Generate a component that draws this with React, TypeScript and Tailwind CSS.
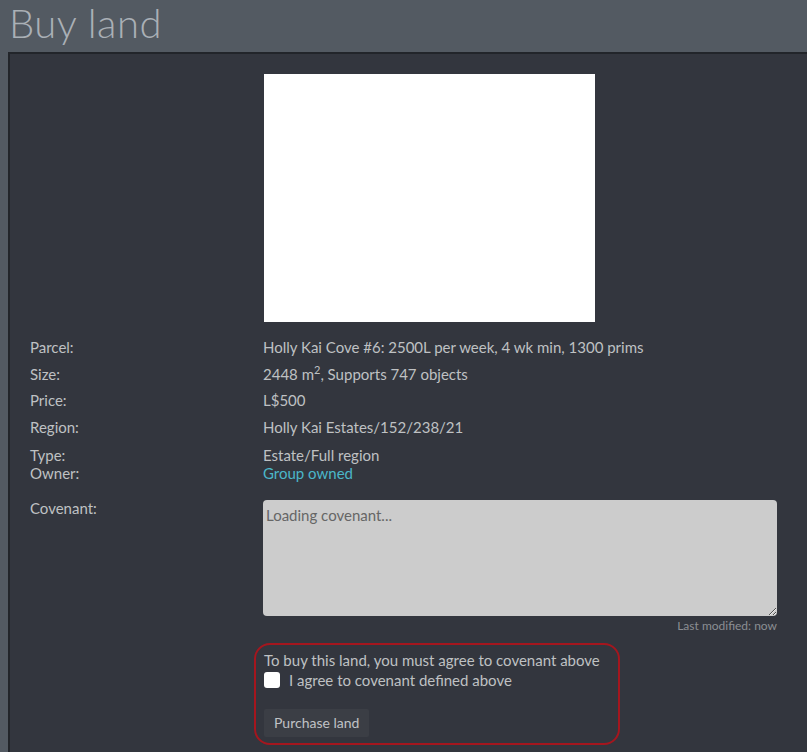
import React from "react";

const rows: [string, React.ReactNode][] = [
  ["Parcel:", "Holly Kai Cove #6: 2500L per week, 4 wk min, 1300 prims"],
  [
    "Size:",
    <>
      2448 m<sup className="text-[11px] -top-[6px]">2</sup>, Supports 747 objects
    </>,
  ],
  ["Price:", "L$500"],
  ["Region:", "Holly Kai Estates/152/238/21"],
];

export default function App() {
  return (
    <div
      className="min-h-[752px] bg-[#535a62] overflow-hidden"
      style={{ fontFamily: "Lato, 'Noto Sans', sans-serif" }}
    >
      {/* Header */}
      <h1 className="h-[52px] pl-[9px] text-[40px] leading-[46px] font-light text-[#aab0b6] tracking-[0.5px]">
        Buy land
      </h1>

      {/* Panel */}
      <div className="ml-[8px] min-h-[700px] bg-[#33363e] border-l-2 border-t-2 border-[#22252a] text-[15px] text-[#bfc1c3]">
        <div className="pl-[254px] pt-[20px]">
          <div className="w-[331px] h-[248px] bg-white" />
        </div>

        <div className="mt-[12px] pl-[20px]">
          {rows.map(([label, value]) => (
            <div key={label} className="flex h-[26.7px] items-center">
              <div className="w-[233px]">{label}</div>
              <div>{value}</div>
            </div>
          ))}
          <div className="flex mt-[5px] leading-[18px]">
            <div className="w-[233px]">
              <div>Type:</div>
              <div>Owner:</div>
            </div>
            <div>
              <div>Estate/Full region</div>
              <div className="text-[#4bb7c9]">Group owned</div>
            </div>
          </div>

          <div className="flex mt-[18px]">
            <div className="w-[233px] leading-[16px]">Covenant:</div>
            <div className="w-[514px]">
              <textarea
                readOnly
                value="Loading covenant..."
                className="block w-full h-[116px] rounded-[4px] bg-[#cccccc] text-[#666] px-[3px] py-[3px] text-[15px] leading-[24px] outline-none"
              />
              <div className="text-right text-[12px] leading-[18px] text-[#8b8e93] mt-[1px]">
                Last modified: now
              </div>
            </div>
          </div>

          <div className="ml-[224px] mt-[8px] w-[366px] h-[102px] border-2 border-[#a5161e] rounded-[16px] pl-[8px] pt-[5px]">
            <div className="leading-[20px]">
              To buy this land, you must agree to covenant above
            </div>
            <label className="flex items-center gap-[9px] leading-[20px]">
              <span className="inline-block w-[16px] h-[16px] bg-white rounded-[3px]" />
              I agree to covenant defined above
            </label>
            <button className="mt-[19px] h-[28px] px-[10px] bg-[#3b3e45] rounded-[2px] text-[14px] text-[#c0c2c5]">
              Purchase land
            </button>
          </div>
        </div>
      </div>
    </div>
  );
}
